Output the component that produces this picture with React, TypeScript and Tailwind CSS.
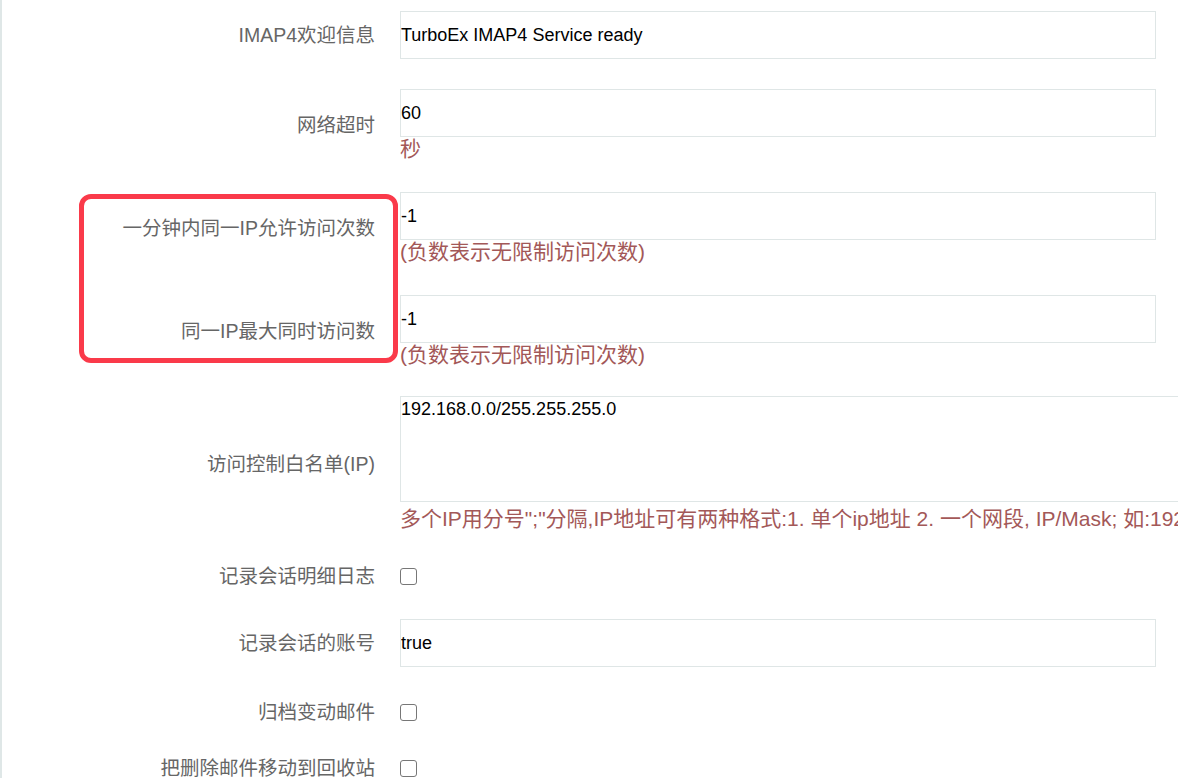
import React from 'react';

const LABEL = "text-[19.5px] text-[#666] text-right leading-[26px] whitespace-nowrap";
const HELP = "text-[21px] leading-[24px] text-[#a35858] whitespace-nowrap";
const INPUT =
  "h-[48px] w-[756px] border border-[#dfe6e6] bg-white pl-0 text-[18px] text-black outline-none";

function Row({ label, children, className }: { label: string; children: React.ReactNode; className: string }) {
  return (
    <div className={`flex items-center ${className}`}>
      <div className={`w-[375px] shrink-0 ${LABEL}`}>{label}</div>
      <div className="ml-[25px] flex flex-col">{children}</div>
    </div>
  );
}

function Box() {
  return <span className="block h-[17px] w-[17px] rounded-[3px] border-[1.5px] border-[#777] bg-white" />;
}

export default function App() {
  return (
    <main
      className="relative h-[778px] w-[1178px] overflow-hidden border-l-2 border-[#dfe7e7] bg-white pt-[11px]"
      style={{ fontFamily: '"Liberation Sans", "Noto Sans CJK SC", sans-serif' }}
    >
      <div className="ml-[-2px] flex flex-col">
        <Row label="IMAP4欢迎信息" className="">
          <input className={INPUT} defaultValue="TurboEx IMAP4 Service ready" />
        </Row>

        <Row label="网络超时" className="mt-[30px]">
          <input className={INPUT} defaultValue="60" />
          <span className={HELP}>秒</span>
        </Row>

        <Row label="一分钟内同一IP允许访问次数" className="mt-[31px]">
          <input className={INPUT} defaultValue="-1" />
          <span className={HELP}>(负数表示无限制访问次数)</span>
        </Row>

        <Row label="同一IP最大同时访问数" className="mt-[31px]">
          <input className={INPUT} defaultValue="-1" />
          <span className={HELP}>(负数表示无限制访问次数)</span>
        </Row>

        <Row label="访问控制白名单(IP)" className="mt-[29px]">
          <textarea
            className="block h-[106px] w-[820px] resize-none border border-[#dfe6e6] bg-white pl-0 pt-0 text-[18px] leading-[24px] text-black outline-none"
            defaultValue="192.168.0.0/255.255.255.0"
          />
          <span className={`mt-[5px] ${HELP}`}>
            多个IP用分号";"分隔,IP地址可有两种格式:1. 单个ip地址 2. 一个网段, IP/Mask; 如:192.168.0.0/255.255.255.0
          </span>
        </Row>

        <Row label="记录会话明细日志" className="mt-[31px] h-[28px]">
          <Box />
        </Row>

        <Row label="记录会话的账号" className="mt-[29px]">
          <input className={INPUT} defaultValue="true" />
        </Row>

        <Row label="归档变动邮件" className="mt-[31px] h-[28px]">
          <Box />
        </Row>

        <Row label="把删除邮件移动到回收站" className="mt-[28px] h-[28px]">
          <Box />
        </Row>
      </div>

      <div className="pointer-events-none absolute left-[77px] top-[194px] h-[169px] w-[319px] rounded-[12px] border-[5px] border-[#fa3a4a]" />
    </main>
  );
}
